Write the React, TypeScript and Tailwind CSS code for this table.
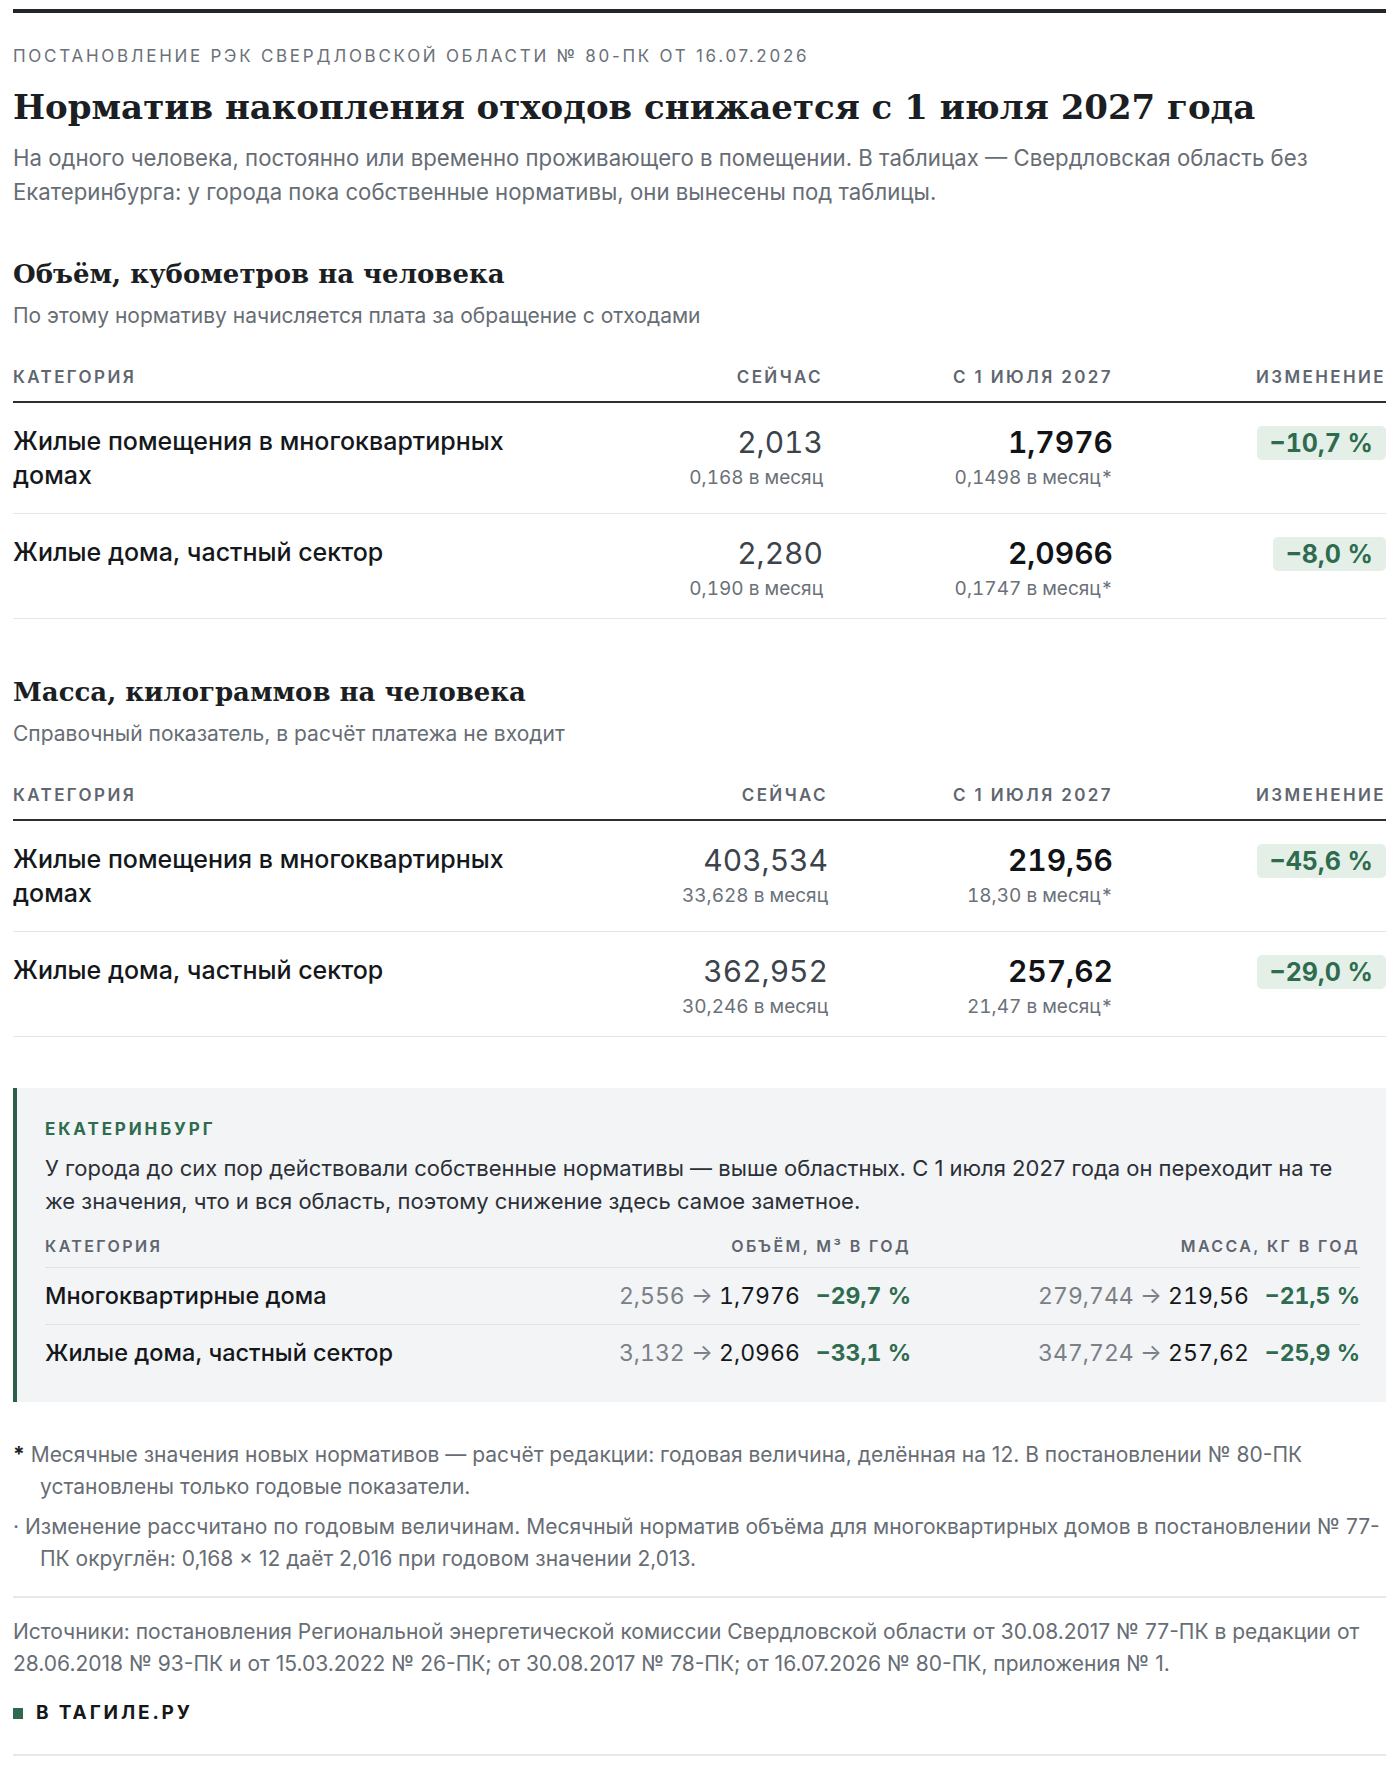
import React from "react";

const sans = "font-['Inter','Noto_Sans',sans-serif]";
const serif = "font-['DejaVu_Serif','Liberation_Serif',serif]";

type Row = { name: string; now: string; nowM: string; next: string; nextM: string; change: string };

const vol: Row[] = [
  { name: "Жилые помещения в многоквартирных домах", now: "2,013", nowM: "0,168 в месяц", next: "1,7976", nextM: "0,1498 в месяц*", change: "−10,7 %" },
  { name: "Жилые дома, частный сектор", now: "2,280", nowM: "0,190 в месяц", next: "2,0966", nextM: "0,1747 в месяц*", change: "−8,0 %" },
];
const mass: Row[] = [
  { name: "Жилые помещения в многоквартирных домах", now: "403,534", nowM: "33,628 в месяц", next: "219,56", nextM: "18,30 в месяц*", change: "−45,6 %" },
  { name: "Жилые дома, частный сектор", now: "362,952", nowM: "30,246 в месяц", next: "257,62", nextM: "21,47 в месяц*", change: "−29,0 %" },
];

function DataTable({ rows, cols }: { rows: Row[]; cols: string }) {
  const head = "text-[17px] leading-[24px] font-semibold tracking-[0.14em] text-[#5f6670] uppercase";
  return (
    <div className="mt-[35px]">
      <div className={`grid ${cols} border-b-2 border-[#2b2f33] pb-[12px]`}>
        <div className={head}>Категория</div>
        <div className={`${head} text-right`}>Сейчас</div>
        <div className={`${head} text-right`}>С 1 июля 2027</div>
        <div className={`${head} text-right`}>Изменение</div>
      </div>
      {rows.map((r) => (
        <div key={r.name} className={`grid ${cols} border-b border-[#e3e5e8] pt-[21px] pb-[17px]`}>
          <div className="pr-[30px] pb-[4px] text-[25px] leading-[34px] font-medium text-[#15181b]">{r.name}</div>
          <div className="text-right">
            <div className="text-[30px] leading-[36px] font-normal text-[#3c434b] tabular-nums">{r.now}</div>
            <div className="mt-[6px] text-[19px] leading-[24px] text-[#6b7178] tabular-nums">{r.nowM}</div>
          </div>
          <div className="text-right">
            <div className="text-[30px] leading-[36px] font-semibold text-[#111316] tabular-nums">{r.next}</div>
            <div className="mt-[6px] text-[19px] leading-[24px] text-[#6b7178] tabular-nums">{r.nextM}</div>
          </div>
          <div className="flex justify-end items-start">
            <span className="mt-[2px] rounded-[5px] bg-[#e4efe8] px-[13px] py-[1px] text-[25px] leading-[32px] font-bold text-[#2e6b4f] tabular-nums">
              {r.change}
            </span>
          </div>
        </div>
      ))}
    </div>
  );
}

export default function App() {
  const ekbHead = "text-[16px] leading-[24px] font-semibold tracking-[0.15em] text-[#5f6670] uppercase";
  return (
    <div className={`${sans} bg-white min-h-[1767px] pl-[13px] pr-[14px] pt-[9px] text-[#1c1f23]`}>
      <div className="border-t-4 border-[#22262b]" />
      <div className="pt-[31px] text-[17px] leading-[24px] tracking-[0.16em] text-[#6b7178] uppercase">
        Постановление РЭК Свердловской области № 80-ПК от 16.07.2026
      </div>
      <h1 className={`${serif} mt-[19px] text-[34px] leading-[41px] font-bold text-[#1b1e22]`}>
        Норматив накопления отходов снижается с 1 июля 2027 года
      </h1>
      <p className="mt-[13px] text-[22.2px] leading-[34px] text-[#676d74]">
        На одного человека, постоянно или временно проживающего в помещении. В таблицах — Свердловская область без Екатеринбурга: у города пока собственные нормативы, они вынесены под таблицы.
      </p>

      <h2 className={`${serif} mt-[49px] text-[26px] leading-[32px] font-bold text-[#1b1e22]`}>Объём, кубометров на человека</h2>
      <p className="mt-[12px] text-[21px] leading-[28px] text-[#676d74]">По этому нормативу начисляется плата за обращение с отходами</p>
      <DataTable rows={vol} cols="grid-cols-[minmax(0,1fr)_260px_290px_273px]" />

      <h2 className={`${serif} mt-[57px] text-[26px] leading-[32px] font-bold text-[#1b1e22]`}>Масса, килограммов на человека</h2>
      <p className="mt-[12px] text-[21px] leading-[28px] text-[#676d74]">Справочный показатель, в расчёт платежа не входит</p>
      <DataTable rows={mass} cols="grid-cols-[minmax(0,1fr)_255px_285px_273px]" />

      <section className="mt-[51px] border-l-4 border-[#2d6048] bg-[#f3f4f6] pl-[28px] pr-[26px] pt-[29px] pb-[21px]">
        <div className="text-[17px] leading-[24px] font-bold tracking-[0.17em] text-[#2e6b4f] uppercase">Екатеринбург</div>
        <p className="mt-[11px] text-[22px] leading-[33px] text-[#2b3036]">
          У города до сих пор действовали собственные нормативы — выше областных. С 1 июля 2027 года он переходит на те же значения, что и вся область, поэтому снижение здесь самое заметное.
        </p>
        <div className="mt-[16px] grid grid-cols-[minmax(0,1fr)_320px_449px] border-b border-[#dfe2e6] pb-[9px]">
          <div className={ekbHead}>Категория</div>
          <div className={`${ekbHead} text-right`}>Объём, м³ в год</div>
          <div className={`${ekbHead} text-right`}>Масса, кг в год</div>
        </div>
        {[
          ["Многоквартирные дома", "2,556", "1,7976", "−29,7 %", "279,744", "219,56", "−21,5 %"],
          ["Жилые дома, частный сектор", "3,132", "2,0966", "−33,1 %", "347,724", "257,62", "−25,9 %"],
        ].map((r, i) => (
          <div key={r[0]} className={`grid grid-cols-[minmax(0,1fr)_320px_449px] py-[14px] ${i === 0 ? "border-b border-[#dfe2e6]" : ""}`}>
            <div className="text-[23.5px] leading-[28px] font-medium text-[#15181b]">{r[0]}</div>
            <div className="text-right text-[23px] leading-[28px] tabular-nums">
              <span className="text-[#7a8087]">{r[1]}</span>
              <span className="text-[#7a8087]"> → </span>
              <span className="text-[#15181b]">{r[2]}</span>
              <span className="ml-[16px] font-bold text-[#2e6b4f]">{r[3]}</span>
            </div>
            <div className="text-right text-[23px] leading-[28px] tabular-nums">
              <span className="text-[#7a8087]">{r[4]}</span>
              <span className="text-[#7a8087]"> → </span>
              <span className="text-[#15181b]">{r[5]}</span>
              <span className="ml-[16px] font-bold text-[#2e6b4f]">{r[6]}</span>
            </div>
          </div>
        ))}
      </section>

      <div className="mt-[37px] text-[21px] leading-[32px] text-[#676d74]">
        <p className="pl-[27px] -indent-[27px]">
          <span className="font-bold text-[#1c1f23]">*</span> Месячные значения новых нормативов — расчёт редакции: годовая величина, делённая на 12. В постановлении № 80-ПК установлены только годовые показатели.
        </p>
        <p className="mt-[8px] pl-[27px] -indent-[27px]">
          · Изменение рассчитано по годовым величинам. Месячный норматив объёма для многоквартирных домов в постановлении № 77-ПК округлён: 0,168 × 12 даёт 2,016 при годовом значении 2,013.
        </p>
      </div>

      <div className="mt-[21px] border-t-2 border-[#e6e8eb] pt-[18px] text-[21px] leading-[32px] text-[#676d74]">
        Источники: постановления Региональной энергетической комиссии Свердловской области от 30.08.2017 № 77-ПК в редакции от 28.06.2018 № 93-ПК и от 15.03.2022 № 26-ПК; от 30.08.2017 № 78-ПК; от 16.07.2026 № 80-ПК, приложения № 1.
      </div>

      <div className="mt-[21px] flex items-center gap-[13px] border-b-2 border-[#e6e8eb] pb-[29px]">
        <span className="inline-block h-[11px] w-[10px] bg-[#2d6a4f]" />
        <span className="text-[19px] leading-[24px] font-bold tracking-[0.15em] text-[#15181b]">В ТАГИЛЕ.РУ</span>
      </div>
    </div>
  );
}
